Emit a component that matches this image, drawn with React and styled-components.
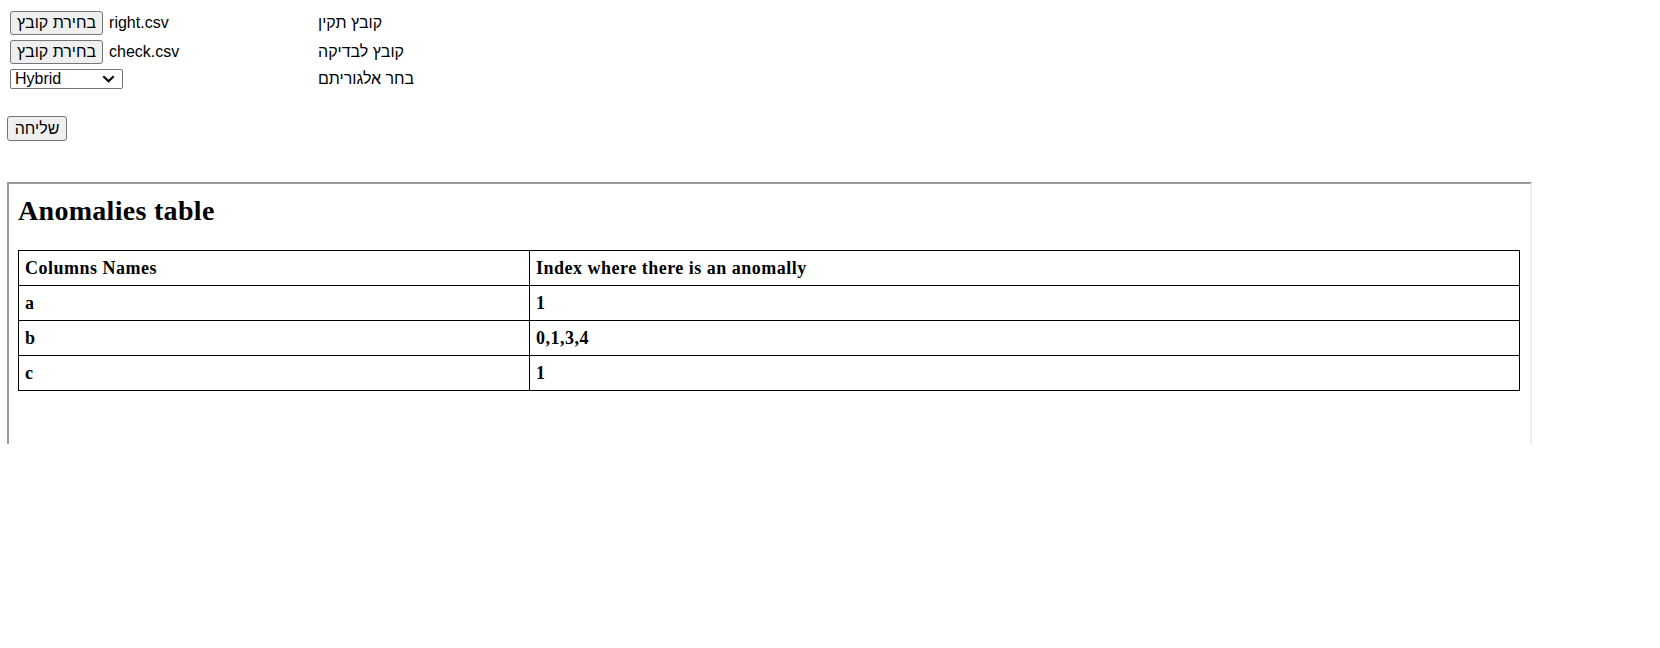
import React, { useState } from "react";
import styled, { createGlobalStyle } from "styled-components";

const anomalies = [
  { column: "a", indexes: "1" },
  { column: "b", indexes: "0,1,3,4" },
  { column: "c", indexes: "1" },
];

function App() {
  const [algorithm, setAlgorithm] = useState("Hybrid");

  return (
    <>
      <GlobalStyle />
      <Page>
        <FieldGrid>
          <FileField>
            <PickButton type="button">בחירת קובץ</PickButton>
            <FileName>right.csv</FileName>
          </FileField>
          <Label>קובץ תקין</Label>

          <FileField>
            <PickButton type="button">בחירת קובץ</PickButton>
            <FileName>check.csv</FileName>
          </FileField>
          <Label>קובץ לבדיקה</Label>

          <SelectWrap>
            <AlgoSelect
              value={algorithm}
              onChange={(e) => setAlgorithm(e.target.value)}
            >
              <option>Hybrid</option>
              <option>Regression</option>
            </AlgoSelect>
            <Chevron viewBox="0 0 13 8" aria-hidden="true">
              <path
                d="M1.3 1.3 L6.5 6.3 L11.7 1.3"
                fill="none"
                stroke="#000"
                strokeWidth="2.2"
              />
            </Chevron>
          </SelectWrap>
          <Label>בחר אלגוריתם</Label>
        </FieldGrid>

        <SubmitButton type="button">שליחה</SubmitButton>

        <ResultFrame>
          <FrameTitle>Anomalies table</FrameTitle>
          <AnomalyTable>
            <tbody>
              <tr>
                <Cell>Columns Names</Cell>
                <Cell>Index where there is an anomally</Cell>
              </tr>
              {anomalies.map((row) => (
                <tr key={row.column}>
                  <Cell>{row.column}</Cell>
                  <Cell>{row.indexes}</Cell>
                </tr>
              ))}
            </tbody>
          </AnomalyTable>
        </ResultFrame>
      </Page>
    </>
  );
}

export default App;

/* The CSS */
const GlobalStyle = createGlobalStyle`
  html, body {
    margin: 0;
    background: #ffffff;
  }
  body {
    font-family: "Liberation Sans", "DejaVu Sans", Arial, sans-serif;
    font-size: 16px;
    color: #000;
  }
`;

const Page = styled.div`
  display: flex;
  flex-direction: column;
  align-items: flex-start;
  padding: 11px 0 0 7px;
`;

const FieldGrid = styled.div`
  display: grid;
  grid-template-columns: 308px auto;
  row-gap: 5px;
  align-items: center;
  margin-left: 3px;
`;

const FileField = styled.div`
  display: flex;
  align-items: center;
  gap: 6px;
  height: 24px;
`;

const PickButton = styled.button`
  height: 24px;
  padding: 0 6px;
  background: #efefef;
  border: 1px solid #767676;
  border-radius: 3px;
  font-family: "Liberation Sans", "DejaVu Sans", Arial, sans-serif;
  font-size: 16px;
  color: #000;
  line-height: 20px;
`;

const FileName = styled.span`
  font-size: 16px;
  line-height: 20px;
`;

const Label = styled.span`
  font-size: 16px;
  line-height: 20px;
`;

const SelectWrap = styled.div`
  position: relative;
  width: 113px;
  height: 20px;
`;

const AlgoSelect = styled.select`
  appearance: none;
  width: 113px;
  height: 20px;
  margin: 0;
  padding: 0 0 0 4px;
  background: #fff;
  border: 1px solid #767676;
  border-radius: 2px;
  font-family: "Liberation Sans", "DejaVu Sans", Arial, sans-serif;
  font-size: 16px;
  line-height: 18px;
  color: #000;
`;

const Chevron = styled.svg`
  position: absolute;
  right: 8px;
  top: 6px;
  width: 13px;
  height: 8px;
  pointer-events: none;
`;

const SubmitButton = styled.button`
  margin-top: 27px;
  width: 60px;
  height: 25px;
  padding: 0 6px;
  background: #efefef;
  border: 1px solid #767676;
  border-radius: 3px;
  font-family: "Liberation Sans", "DejaVu Sans", Arial, sans-serif;
  font-size: 16px;
  color: #000;
`;

const ResultFrame = styled.div`
  margin-top: 41px;
  width: 1525px;
  height: 262px;
  box-sizing: border-box;
  padding: 0 10px 0 9px;
  border-top: 2px solid #9a9a9a;
  border-left: 2px solid #9a9a9a;
  border-right: 2px solid #eeeeee;
  font-family: "Liberation Serif", "Times New Roman", serif;
`;

const FrameTitle = styled.h2`
  margin: 11px 0 23px;
  font-size: 28px;
  line-height: 32px;
  font-weight: 700;
  letter-spacing: 0.3px;
`;

const AnomalyTable = styled.table`
  width: 100%;
  border-collapse: collapse;
  border: 1px solid #000;
`;

const Cell = styled.td`
  padding: 7px 6px;
  border: 1px solid #000;
  font-size: 18px;
  line-height: 20px;
  font-weight: 700;
  letter-spacing: 0.5px;
  text-align: left;
  &:first-child {
    width: 498px;
  }
`;
